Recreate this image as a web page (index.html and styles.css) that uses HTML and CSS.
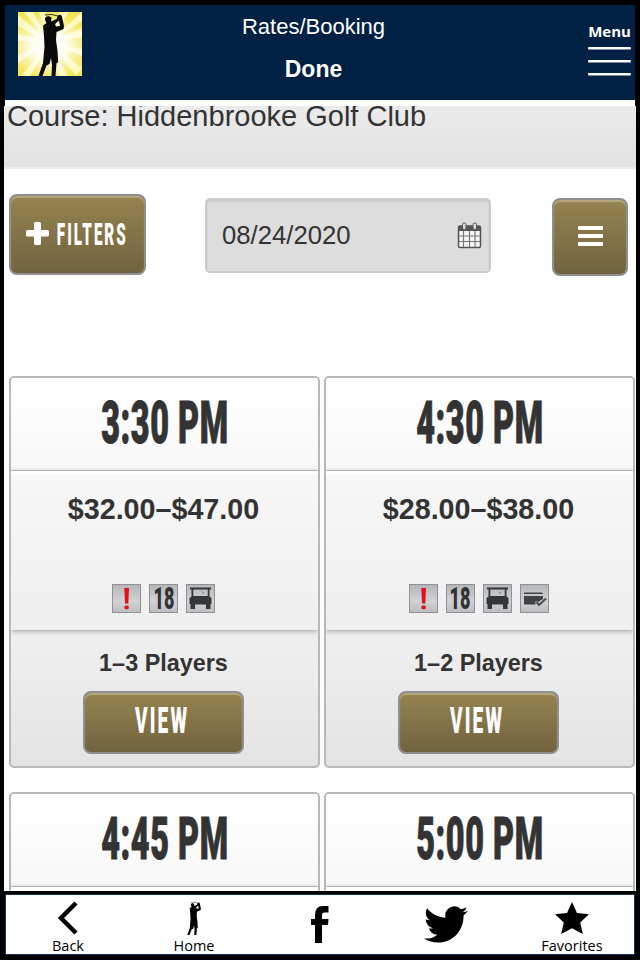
FILE: index.html
```html
<!DOCTYPE html>
<html lang="en">
<head>
    <meta charset="UTF-8">
    <meta name="viewport" content="width=device-width, initial-scale=1.0">
    <title>Rates/Booking</title>
    <link rel="stylesheet" href="styles.css">
</head>
<body>
    <!-- Shared icons -->
    <svg class="defs" width="0" height="0">
        <defs>
            <radialGradient id="glow">
                <stop offset="0" stop-color="#fff"/>
                <stop offset="0.4" stop-color="#fff" stop-opacity="0.9"/>
                <stop offset="1" stop-color="#fff" stop-opacity="0"/>
            </radialGradient>
            <linearGradient id="tile" x1="0" y1="0" x2="0" y2="1">
                <stop offset="0" stop-color="#b4b6ba"/>
                <stop offset="0.6" stop-color="#d0d2d5"/>
                <stop offset="1" stop-color="#bcbec1"/>
            </linearGradient>
        </defs>
        <symbol id="golfer" viewBox="18 0 30 64">
            <path d="M27 3L33 2.400L40 4" fill="none" stroke="currentColor" stroke-width="0.800"/>
            <path d="M27 8C26.500 5 29 3.700 31 4.300L33.500 5.500L33 9.500L38.500 7L40 3.200L43 2.800L44 5L46 14L45.500 17L38.500 20L38 28L39.500 39L40.200 50L38.500 51.500L37.500 64H33.500L34 53L33 46L31.500 52L28.500 53.500L24.500 64H20.500L25 51L26.500 35L26 24L25 13.500L28.500 11Z M38 14.500L42 14L41 8.500L37 12Z" fill="currentColor" fill-rule="evenodd"/>
        </symbol>
        <symbol id="alert" viewBox="0 0 29 29">
            <rect x="0.500" y="0.500" width="28" height="28" fill="url(#tile)" stroke="#8f9194"/>
            <path d="M12.300 4H17L16.300 19.500H13Z" fill="#e3101a"/>
            <rect x="12.400" y="21.500" width="4.400" height="3.800" rx="1.500" fill="#e3101a"/>
        </symbol>
        <symbol id="cart" viewBox="0 0 29 29">
            <rect x="0.500" y="0.500" width="28" height="28" fill="url(#tile)" stroke="#8f9194"/>
            <path d="M4 3.500H25V5.500H23.500V12.500L25.500 14V20H24.500V25H20V20.500H9V25H4.500V20H3.500V14L5.500 12.500V5.500H4Z M7.300 5.500V12H21.700V5.500Z" fill="#34373a" fill-rule="evenodd"/>
            <path d="M15 7L19 9L17 10Z" fill="#8b8e91"/>
        </symbol>
        <symbol id="card" viewBox="0 0 29 29">
            <rect x="0.500" y="0.500" width="28" height="28" fill="url(#tile)" stroke="#8f9194"/>
            <path d="M4 8.500H21.500Q23 8.500 23 10H4Z M4 12H23V15L18 18L15.500 17V20.500H4Z" fill="#404346"/>
            <path d="M16.500 18L19 21L26 14.500" fill="none" stroke="#505356" stroke-width="2.200"/>
        </symbol>
    </svg>

    <div class="app">
        <!-- Header -->
        <header class="header">
            <svg class="logo" viewBox="0 0 64 64">
                <rect width="64" height="64" fill="#f3e65a"/>
                <g fill="#fff9bd">
                    <path d="M31 30L0 3V14Z"/>
                    <path d="M31 30L6 0H15Z"/>
                    <path d="M31 30L21 0H27Z"/>
                    <path d="M31 30L42 0H51Z"/>
                    <path d="M31 30L64 0V9Z"/>
                    <path d="M31 30L64 16V25Z"/>
                    <path d="M31 30L0 22V29Z"/>
                    <path d="M31 30L0 43V51Z"/>
                    <path d="M31 30L3 64H12Z"/>
                    <path d="M31 30L41 64H50Z"/>
                    <path d="M31 30L58 64L64 56Z"/>
                    <path d="M31 30L64 37V44Z"/>
                </g>
                <ellipse cx="31" cy="34" rx="42" ry="32" fill="url(#glow)"/>
                <use href="#golfer" x="18" y="0" width="30" height="64" color="#0a0a08"/>
            </svg>
            <div class="titles">
                <div class="title">Rates/Booking</div>
                <div class="done">Done</div>
            </div>
            <div class="menu">
                <span>Menu</span>
                <i></i><i></i><i></i>
            </div>
        </header>

        <main class="content">
            <div class="course">Course: Hiddenbrooke Golf Club</div>

            <!-- Filters and date -->
            <div class="toolbar">
                <button class="gold filters">
                    <svg width="23" height="23" viewBox="0 0 23 23"><path d="M9.500 0H13.500Q15 0 15 1.500V8H21.500Q23 8 23 9.500V13Q23 14.500 21.500 14.500H15V21.500Q15 23 13.500 23H9.500Q8 23 8 21.500V14.500H1.500Q0 14.500 0 13V9.500Q0 8 1.500 8H8V1.500Q8 0 9.500 0Z" fill="#fff"/></svg>
                    <span class="slot filters-slot"><span class="narrow">FILTERS</span></span>
                </button>
                <div class="date">
                    <span>08/24/2020</span>
                    <svg width="25" height="27" viewBox="0 0 25 27">
                        <rect x="1.500" y="4" width="22" height="21.500" rx="1.500" fill="#f6f6f6" stroke="#555" stroke-width="1.500"/>
                        <path d="M1.500 4H23.500V9H1.500Z" fill="#555"/>
                        <path d="M6.500 9V25M12.500 9V25M18 9V25M2 14H23M2 19.500H23" stroke="#777" stroke-width="1.200"/>
                        <rect x="5.500" y="1" width="3.500" height="6.500" rx="1.500" fill="#ddd" stroke="#555"/>
                        <rect x="16" y="1" width="3.500" height="6.500" rx="1.500" fill="#ddd" stroke="#555"/>
                    </svg>
                </div>
                <button class="gold list">
                    <i></i><i></i><i></i>
                </button>
            </div>

            <!-- Tee times -->
            <div class="times">
                <div class="tee">
                    <div class="hour"><span class="narrow">3:30 PM</span></div>
                    <div class="rate">
                        <div class="price">$32.00–$47.00</div>
                        <div class="tags">
                            <svg><use href="#alert"/></svg>
                            <span class="holes"><span class="narrow">18</span></span>
                            <svg><use href="#cart"/></svg>
                        </div>
                    </div>
                    <div class="players">
                        <span>1–3 Players</span>
                        <button class="gold view"><span class="slot view-slot"><span class="narrow">VIEW</span></span></button>
                    </div>
                </div>
                <div class="tee">
                    <div class="hour"><span class="narrow">4:30 PM</span></div>
                    <div class="rate">
                        <div class="price">$28.00–$38.00</div>
                        <div class="tags">
                            <svg><use href="#alert"/></svg>
                            <span class="holes"><span class="narrow">18</span></span>
                            <svg><use href="#cart"/></svg>
                            <svg><use href="#card"/></svg>
                        </div>
                    </div>
                    <div class="players">
                        <span>1–2 Players</span>
                        <button class="gold view"><span class="slot view-slot"><span class="narrow">VIEW</span></span></button>
                    </div>
                </div>
                <div class="tee">
                    <div class="hour"><span class="narrow">4:45 PM</span></div>
                    <div class="rate"></div>
                </div>
                <div class="tee">
                    <div class="hour"><span class="narrow">5:00 PM</span></div>
                    <div class="rate"></div>
                </div>
            </div>
        </main>

        <!-- Bottom navigation -->
        <nav class="nav">
            <a class="nav-item">
                <svg width="22" height="34" viewBox="0 0 22 34"><path d="M19 2L4 17L19 32" fill="none" stroke="#000" stroke-width="4.500"/></svg>
                <span>Back</span>
            </a>
            <a class="nav-item">
                <svg width="16" height="34"><use href="#golfer"/></svg>
                <span>Home</span>
            </a>
            <a class="nav-item social">
                <svg width="18" height="37" viewBox="0 0 18 37"><path d="M4 37V19H0V13H4V9Q4 0 12 0H17.500V6.500H13.500Q11 6.500 11 9V13H17.500L17 19H11V37Z"/></svg>
            </a>
            <a class="nav-item social">
                <svg width="44" height="37" viewBox="0 0 24 20" preserveAspectRatio="none"><path d="M23.950 2.570a10 10 0 0 1-2.820.770 4.960 4.960 0 0 0 2.160-2.720c-.950.550-2 .950-3.130 1.180a4.920 4.920 0 0 0-8.380 4.480C7.690 6.090 4.070 4.130 1.640 1.160a4.820 4.820 0 0 0-.670 2.470c0 1.710.870 3.210 2.190 4.100a4.900 4.900 0 0 1-2.230-.620v.060a4.920 4.920 0 0 0 3.950 4.830 4.990 4.990 0 0 1-2.210.080 4.940 4.940 0 0 0 4.600 3.420A9.870 9.870 0 0 1 0 17.540a13.990 13.990 0 0 0 7.560 2.210c9.050 0 14-7.500 14-13.990 0-.210 0-.420-.020-.630a9.940 9.940 0 0 0 2.410-2.560Z"/></svg>
            </a>
            <a class="nav-item">
                <svg width="34" height="34" viewBox="0 0 34 34"><path d="M17 1L22 12L34 13.200L25.200 21.500L27.800 33L17 27.200L6.200 33L8.800 21.500L0 13.200L12 12Z"/></svg>
                <span>Favorites</span>
            </a>
        </nav>
    </div>
</body>
</html>
```
FILE: styles.css
```css
* {
    box-sizing: border-box;
}

body {
    margin: 0;
    background-color: #000;
    color: #333;
    font-family: "Liberation Sans", Arial, sans-serif;
}

.defs {
    display: block;
}

.app {
    display: flex;
    flex-direction: column;
    width: 640px;
    height: 960px;
    padding: 5px 4px 4px;
    overflow: hidden;
}

/* Header */
.header {
    display: flex;
    justify-content: space-between;
    height: 101px;
    margin: 0 1px;
    padding-left: 13px;
    background-color: #002144;
    border-bottom: 6px solid #fff;
    color: #fff;
    flex: none;
}

.logo {
    width: 64px;
    height: 64px;
    margin-top: 7px;
}

.titles {
    width: 200px;
    margin: 9px 0 0 37px;
    text-align: center;
}

.title {
    font-size: 22px;
    line-height: 26px;
}

.done {
    margin-top: 15px;
    font-size: 23px;
    font-weight: bold;
    line-height: 28px;
}

.menu {
    display: flex;
    flex-direction: column;
    align-items: center;
    width: 43px;
    margin: 16px 4px 0 80px;
    font-family: "Open Sans", sans-serif;
    font-size: 15px;
    font-weight: bold;
    line-height: 20px;
}

.menu i {
    width: 43px;
    height: 2px;
    margin-bottom: 11px;
    border-radius: 1px;
    background-color: #fff;
    box-shadow: 0 1px rgba(255, 255, 255, 0.5);
}

.menu span {
    margin-bottom: 6px;
}

/* Scrolled page area */
.content {
    height: 785px;
    flex: none;
    background-color: #fff;
    overflow: hidden;
}

.course {
    height: 63px;
    padding-left: 3px;
    background: linear-gradient(#ebebeb, #e2e2e2);
    border-bottom: 2px solid #ececec;
    font-size: 29px;
    line-height: 20px;
}

.toolbar {
    display: flex;
    align-items: flex-start;
    justify-content: space-between;
    height: 207px;
    padding: 25px 8px 0 5px;
}

.gold {
    display: flex;
    align-items: center;
    justify-content: center;
    padding: 0;
    border: 2px solid #8f8f8f;
    border-radius: 8px;
    background: linear-gradient(#95834f, #716340);
    box-shadow: inset 0 2px 1px #b5a77e;
    color: #fff;
    font-family: Roboto, sans-serif;
}

.narrow {
    display: inline-block;
    font-family: Roboto, sans-serif;
    font-weight: 900;
    white-space: nowrap;
}

.slot {
    display: flex;
    justify-content: center;
}

.filters {
    width: 137px;
    height: 81px;
    gap: 7px;
}

.filters svg {
    margin-top: -2px;
}

.filters-slot {
    width: 74px;
}

.filters .narrow {
    font-size: 31px;
    letter-spacing: 4px;
    transform: scaleX(0.49);
}

.date {
    display: flex;
    align-items: center;
    justify-content: space-between;
    width: 286px;
    height: 75px;
    margin: 4px 0 0 -2px;
    padding: 0 7px 0 15px;
    border: 2px solid #cbcbcb;
    border-radius: 5px;
    background-color: #dddddd;
    box-shadow: inset 0 2px 2px #c9c9c9;
    font-size: 25.700px;
}

.list {
    flex-direction: column;
    gap: 4px;
    width: 76px;
    height: 78px;
    margin-top: 4px;
    padding-bottom: 2px;
}

.list i {
    width: 25px;
    height: 4px;
    border-radius: 1px;
    background-color: #fff;
}

/* Tee time cards */
.times {
    display: grid;
    grid-template-columns: 311px 311px;
    grid-auto-rows: 392px;
    gap: 24px 4px;
    padding-left: 5px;
}

.tee {
    border: 2px solid #b8b8b8;
    border-radius: 5px;
    background: linear-gradient(#fff, #f8f8f8 24%, #f3f3f3 55%, #e4e4e4);
    overflow: hidden;
}

.hour {
    display: flex;
    justify-content: center;
    height: 93px;
    border-bottom: 1px solid #c4c4c4;
    background: linear-gradient(#fff, #f8f8f8);
}

.hour .narrow {
    font-size: 60px;
    line-height: 89px;
    letter-spacing: 1px;
    -webkit-text-stroke: 1px #333;
    transform: scaleX(0.54);
}

.rate {
    display: flex;
    flex-direction: column;
    align-items: center;
    justify-content: space-between;
    height: 159px;
    padding: 17px 0;
    border-top: 4px solid #fff;
    background: linear-gradient(#f7f7f7, #efefef);
    box-shadow: 0 1px 5px rgba(0, 0, 0, 0.35);
}

.price {
    margin-left: -2px;
    font-size: 28.700px;
    font-weight: bold;
    line-height: 34px;
}

.tags {
    display: flex;
    gap: 8px;
    margin-left: -2px;
}

.tags svg,
.holes {
    width: 29px;
    height: 29px;
}

.holes {
    display: flex;
    justify-content: center;
    border: 1px solid #8f9194;
    background: linear-gradient(#b4b6ba, #d0d2d5 60%, #bcbec1);
}

.holes .narrow {
    font-size: 31px;
    line-height: 27px;
    transform: scaleX(0.58);
}

.players {
    display: flex;
    flex-direction: column;
    align-items: center;
    padding-top: 19px;
    font-size: 23.400px;
    font-weight: bold;
    line-height: 28px;
}

.players > span {
    margin-left: -2px;
}

.view {
    width: 161px;
    height: 63px;
    margin: 14px 2px 0 0;
}

.view-slot {
    width: 60px;
    margin: -4px 0 0 -2px;
}

.view .narrow {
    font-size: 36px;
    letter-spacing: 4px;
    transform: scaleX(0.53);
}

/* Bottom navigation */
.nav {
    display: grid;
    grid-template-columns: repeat(5, 126px);
    height: 61px;
    margin: 3px 1px 0;
    border: 1px solid #0d3157;
    background-color: #fff;
    color: #000;
    flex: none;
}

.nav-item {
    display: flex;
    flex-direction: column;
    align-items: center;
    padding: 6px 2px 0 0;
    font-family: "Open Sans", sans-serif;
    font-size: 14.500px;
    line-height: 21px;
}

.social {
    padding-top: 11px;
}
```
